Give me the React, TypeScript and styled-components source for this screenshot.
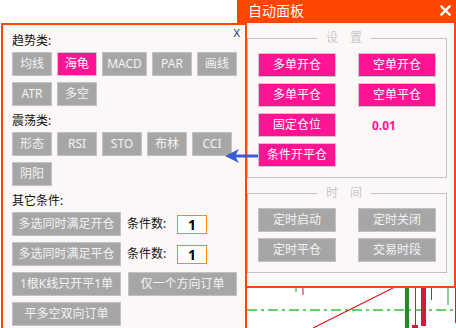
import React from 'react';
import styled, { createGlobalStyle, css } from 'styled-components';

const GlobalStyle = createGlobalStyle`
  html, body { margin: 0; padding: 0; background: #ffffff; }
  body { font-family: "Noto Sans", "Noto Sans CJK SC", sans-serif; }
  * { box-sizing: border-box; }
`;

const ORANGE = '#ff4500';
const PANEL_BG = '#fcf8f7';

const Desktop = styled.div`
  position: relative;
  width: 456px;
  height: 328px;
  overflow: hidden;
  background: #ffffff;
  font-size: 12px;
  color: #111;
`;

const Chart = styled.svg`
  position: absolute;
  left: 0;
  top: 0;
  z-index: 0;
`;

const Win = styled.div<{ $x: number; $y: number; $w: number; $h: number; $z: number }>`
  position: absolute;
  left: ${(p) => p.$x}px;
  top: ${(p) => p.$y}px;
  width: ${(p) => p.$w}px;
  height: ${(p) => p.$h}px;
  z-index: ${(p) => p.$z};
  display: flex;
  flex-direction: column;
`;

/* ---------- left panel ---------- */
const LeftBody = styled.div`
  position: relative;
  flex: 1;
  background: ${PANEL_BG};
  border: 2px solid ${ORANGE};
  padding: 8px 0 0 9px;
  display: flex;
  flex-direction: column;
`;

const SmallClose = styled.span`
  position: absolute;
  top: 2px;
  right: 5px;
  font-size: 11px;
  line-height: 11px;
  color: #1c2a5e;
`;

const SectionLabel = styled.div<{ $first?: boolean }>`
  height: 16px;
  line-height: 16px;
  margin-top: ${(p) => (p.$first ? 0 : 7)}px;
  margin-bottom: 3px;
  color: #111;
`;

const WrapGrid = styled.div`
  width: 226px;
  display: flex;
  flex-wrap: wrap;
  gap: 6px 5px;
`;

const Stack = styled.div`
  display: flex;
  flex-direction: column;
  gap: 6px;
`;

const Row = styled.div<{ $gap?: number }>`
  display: flex;
  align-items: center;
  gap: ${(p) => p.$gap ?? 0}px;
`;

const Btn = styled.button<{ $tone: 'gray' | 'pink'; $w: number }>`
  width: ${(p) => p.$w}px;
  height: 24px;
  padding: 0;
  margin: 0;
  font-family: inherit;
  font-size: 12px;
  line-height: 22px;
  text-align: center;
  white-space: nowrap;
  cursor: pointer;
  ${(p) =>
    p.$tone === 'pink'
      ? css`
          background: #ff1493;
          border: 1px solid #d6c3c8;
          color: #ffffff;
        `
      : css`
          background: #a6a6a6;
          border: 1px solid #c2c2c2;
          color: #f4f4f4;
        `}
`;

const CountLabel = styled.span`
  width: 50px;
  margin-left: 6px;
  line-height: 16px;
  color: #111;
`;

const CountBox = styled.div`
  width: 30px;
  height: 19px;
  border: 1px solid #ff8c00;
  background: #ffffff;
  display: flex;
  align-items: center;
  justify-content: center;
  font-weight: 700;
  font-size: 14px;
  color: #000;
`;

/* ---------- right panel ---------- */
const TitleBar = styled.div`
  height: 23px;
  background: ${ORANGE};
  color: #ffffff;
  display: flex;
  align-items: center;
  justify-content: space-between;
  padding: 0 5px 2px 11px;
  font-size: 14px;
  line-height: 18px;
`;

const RightBody = styled.div`
  flex: 1;
  background: ${PANEL_BG};
  border: 2px solid ${ORANGE};
  border-top: none;
  padding: 9px 7px 0 8px;
  display: flex;
  flex-direction: column;
`;

const Group = styled.div<{ $first?: boolean }>`
  margin-top: ${(p) => (p.$first ? 0 : 9)}px;
  display: flex;
  flex-direction: column;
`;

const GroupHead = styled.div`
  display: flex;
  height: 12px;
  line-height: 12px;
  color: #c6c6c6;
  &::before,
  &::after {
    content: '';
    margin-top: 6px;
    border-top: 1px solid #c2c2c2;
  }
  &::before {
    width: 70px;
    border-left: 1px solid #c2c2c2;
  }
  &::after {
    flex: 1;
    border-right: 1px solid #c2c2c2;
  }
`;

const GroupTitle = styled.span`
  padding: 0 8px;
  white-space: pre;
  word-spacing: 9px;
`;

const GroupBody = styled.div`
  border: 1px solid #c2c2c2;
  border-top: none;
  padding: 9px 10px 10px 10px;
  display: grid;
  grid-template-columns: 78px 78px;
  column-gap: 22px;
  row-gap: 6px;
`;

const Value = styled.span`
  padding-left: 14px;
  align-self: center;
  color: #ff1493;
  font-weight: 700;
  font-size: 12px;
`;

const Pointer = styled.svg`
  position: absolute;
  left: 222px;
  top: 146px;
  z-index: 5;
`;

export default function App() {
  return (
    <>
      <GlobalStyle />
      <Desktop>
        <Chart width={456} height={328} viewBox="0 0 456 328">
          <line x1={247} y1={310} x2={456} y2={310} stroke="#2ec82e" strokeWidth={1.3} strokeDasharray="10 4 3 4" />
          <line x1={313} y1={328} x2={393} y2={288} stroke="#ee1111" strokeWidth={1.2} />
          <rect x={295.5} y={288} width={1} height={4} fill="#2a9a2a" />
          <rect x={302.5} y={288} width={1} height={7} fill="#dc143c" />
          <rect x={405} y={288} width={4} height={40} fill="#228b22" />
          <rect x={415} y={288} width={1} height={37} fill="#dc143c" />
          <rect x={412} y={325} width={6} height={3} fill="#dc143c" />
          <rect x={421} y={288} width={5} height={38} fill="#dc143c" />
          <rect x={431} y={288} width={1} height={12} fill="#dc143c" />
          <rect x={447.5} y={288} width={1} height={17} fill="#2a9a2a" />
          <rect x={455} y={288} width={1} height={35} fill="#dc143c" />
        </Chart>

        <Win $x={237} $y={0} $w={219} $h={288} $z={1}>
          <TitleBar>
            <span>自动面板</span>
            <svg width="11" height="11" viewBox="0 0 11 11">
              <path d="M1.5 1.5 L9.5 9.5 M9.5 1.5 L1.5 9.5" stroke="#ffffff" strokeWidth="2.4" strokeLinecap="square" />
            </svg>
          </TitleBar>
          <RightBody>
            <Group $first>
              <GroupHead>
                <GroupTitle>设 置</GroupTitle>
              </GroupHead>
              <GroupBody>
                <Btn $tone="pink" $w={78}>多单开仓</Btn>
                <Btn $tone="pink" $w={78}>空单开仓</Btn>
                <Btn $tone="pink" $w={78}>多单平仓</Btn>
                <Btn $tone="pink" $w={78}>空单平仓</Btn>
                <Btn $tone="pink" $w={78}>固定仓位</Btn>
                <Value>0.01</Value>
                <Btn $tone="pink" $w={78}>条件开平仓</Btn>
              </GroupBody>
            </Group>
            <Group>
              <GroupHead>
                <GroupTitle>时 间</GroupTitle>
              </GroupHead>
              <GroupBody>
                <Btn $tone="gray" $w={78}>定时启动</Btn>
                <Btn $tone="gray" $w={78}>定时关闭</Btn>
                <Btn $tone="gray" $w={78}>定时平仓</Btn>
                <Btn $tone="gray" $w={78}>交易时段</Btn>
              </GroupBody>
            </Group>
          </RightBody>
        </Win>

        <Win $x={1} $y={23} $w={246} $h={320} $z={2}>
          <LeftBody>
            <SmallClose>X</SmallClose>
            <SectionLabel $first>趋势类:</SectionLabel>
            <WrapGrid>
              <Btn $tone="gray" $w={40}>均线</Btn>
              <Btn $tone="pink" $w={40}>海龟</Btn>
              <Btn $tone="gray" $w={45}>MACD</Btn>
              <Btn $tone="gray" $w={40}>PAR</Btn>
              <Btn $tone="gray" $w={40}>画线</Btn>
              <Btn $tone="gray" $w={40}>ATR</Btn>
              <Btn $tone="gray" $w={40}>多空</Btn>
            </WrapGrid>
            <SectionLabel>震荡类:</SectionLabel>
            <WrapGrid>
              <Btn $tone="gray" $w={40}>形态</Btn>
              <Btn $tone="gray" $w={40}>RSI</Btn>
              <Btn $tone="gray" $w={40}>STO</Btn>
              <Btn $tone="gray" $w={40}>布林</Btn>
              <Btn $tone="gray" $w={40}>CCI</Btn>
              <Btn $tone="gray" $w={40}>阴阳</Btn>
            </WrapGrid>
            <SectionLabel>其它条件:</SectionLabel>
            <Stack>
              <Row>
                <Btn $tone="gray" $w={109}>多选同时满足开仓</Btn>
                <CountLabel>条件数:</CountLabel>
                <CountBox>1</CountBox>
              </Row>
              <Row>
                <Btn $tone="gray" $w={109}>多选同时满足平仓</Btn>
                <CountLabel>条件数:</CountLabel>
                <CountBox>1</CountBox>
              </Row>
              <Row $gap={7}>
                <Btn $tone="gray" $w={109}>1根K线只开平1单</Btn>
                <Btn $tone="gray" $w={109}>仅一个方向订单</Btn>
              </Row>
              <Row>
                <Btn $tone="gray" $w={109}>平多空双向订单</Btn>
              </Row>
            </Stack>
          </LeftBody>
        </Win>

        <Pointer width={40} height={20} viewBox="0 0 40 20">
          <path d="M3 10 L17 3 L14 8.6 L36 8.6 L36 11.4 L14 11.4 L17 17 Z" fill="#3a5dd6" />
        </Pointer>
      </Desktop>
    </>
  );
}
